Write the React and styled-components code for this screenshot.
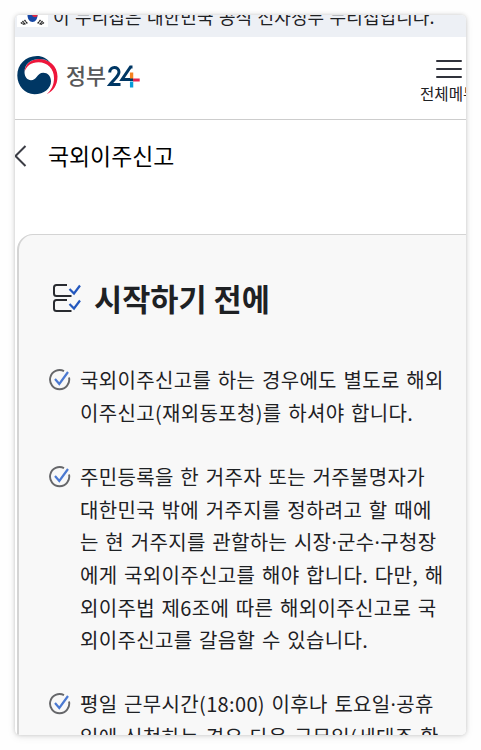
import React from "react";
import styled, { createGlobalStyle } from "styled-components";

const GlobalStyle = createGlobalStyle`
  * { box-sizing: border-box; }
  body { margin: 0; background: #fefefe; font-family: "Noto Sans CJK KR", "Noto Sans", sans-serif; color: #1e2124; }
  h1, h2, p, ul { margin: 0; padding: 0; }
`;

const Page = styled.div`
  height: 750px;
  padding: 15px 15px 15px 15px;
  overflow: hidden;
`;

const Screen = styled.main`
  height: 720px;
  overflow: hidden;
  border-radius: 5px;
  background: #fff;
  box-shadow: 0 0 4px rgba(0, 0, 0, 0.18), 0 2px 9px rgba(0, 0, 0, 0.08);
`;

const Notice = styled.div`
  display: flex;
  align-items: flex-start;
  height: 22px;
  padding-left: 2px;
  overflow: hidden;
  background: #edf0f5;
`;

const Flag = styled.svg`
  flex: none;
  width: 31px;
  height: 12px;
  margin-right: 5px;
`;

const NoticeText = styled.p`
  font-size: 18px;
  line-height: 24px;
  margin-top: -11px;
  white-space: nowrap;
  letter-spacing: 0.1px;
  word-spacing: 1.2px;
`;

const Header = styled.header`
  display: flex;
  justify-content: space-between;
  height: 83px;
  border-bottom: 1px solid #cdcdcd;
`;

const Logo = styled.svg`
  width: 130px;
  height: 44px;
  margin: 17px 0 0 1px;
`;

const MenuButton = styled.button`
  display: flex;
  flex-direction: column;
  align-items: flex-start;
  width: 46px;
  padding: 22px 0 0;
  border: 0;
  background: none;
  overflow: hidden;
  color: #1e2124;
  font: 15.6px/20px "Noto Sans CJK KR", sans-serif;
  white-space: nowrap;

  svg { flex: none; margin: 0 0 4px 16px; }
`;

const TitleBar = styled.div`
  display: flex;
  align-items: center;
  height: 71px;

  svg { flex: none; margin-right: 21px; }
`;

const PageTitle = styled.h1`
  margin-top: -2px;
  color: #000;
  font-size: 22.9px;
  font-weight: 400;
  line-height: 34px;
`;

const Card = styled.section`
  width: 490px;
  height: 600px;
  margin: 43px 0 0 2px;
  padding: 39px 0 0 30px;
  border: 2px solid #d4d4d4;
  border-top-width: 1px;
  border-radius: 16px;
  background: #f8f8f8;
`;

const CardHeading = styled.div`
  display: flex;
  align-items: center;
  height: 48px;
  margin-bottom: 42.3px;

  svg { flex: none; margin: 0 13px 0 4px; }
`;

const CardTitle = styled.h2`
  font-size: 30.6px;
  font-weight: 700;
  line-height: 44px;
  white-space: nowrap;
`;

const Notes = styled.ul`
  list-style: none;
`;

const Note = styled.li`
  display: flex;
  margin-bottom: 31.3px;

  svg { flex: none; margin: 4px 8px 0 -1px; }
`;

const NoteText = styled.p`
  font-size: 20px;
  line-height: 32.65px;
  letter-spacing: 0.34px;
  word-spacing: 1.8px;
  white-space: pre;
`;

const MiddleDot = styled.span`
  font-family: "Noto Sans", sans-serif;
  line-height: 1;
`;

const notes = [
  "국외이주신고를 하는 경우에도 별도로 해외\n이주신고(재외동포청)를 하셔야 합니다.",
  "주민등록을 한 거주자 또는 거주불명자가\n대한민국 밖에 거주지를 정하려고 할 때에\n는 현 거주지를 관할하는 시장·군수·구청장\n에게 국외이주신고를 해야 합니다. 다만, 해\n외이주법 제6조에 따른 해외이주신고로 국\n외이주신고를 갈음할 수 있습니다.",
  "평일 근무시간(18:00) 이후나 토요일·공휴\n일에 신청하는 경우 다음 근무일(세대주 확",
];

function FlagMark() {
  return (
    <Flag viewBox="0 0 31 12">
      <rect width="31" height="12" fill="#fff" />
      <path d="M10.5 0h10c0 4-2 7-5 7s-5-3-5-7" fill="#1747a5" />
      <path d="M15 0h5.5c0 3-4.5 3-5.5 0" fill="#db2742" />
      <g stroke="#222" strokeWidth="1.3">
        <path d="M5.5 6l3 3.7M7.5 5l3 3.7M3.8 7.5l3 2" strokeDasharray="2 .5" />
        <path d="M25.5 6l-3 3.7M23.5 5l-3 3.7M27 7.5l-3 2" strokeDasharray="2 .5" />
      </g>
    </Flag>
  );
}

function SiteLogo() {
  return (
    <Logo viewBox="0 0 130 44">
      <path d="M8.5 18C9 10 15 5 23 5c10 0 18.500 7 18.500 17.500 0 9-4.500 15-11 17.800C35.500 36 38 31 38 24c0-9-6.500-15.700-15.500-15.700C15 8.300 10.500 12 8.500 18Z" fill="#ee163b" />
      <path d="M21 2C9.5 2 1.3 10.5 1.3 21.5c0 10.500 7.700 18.700 17.200 18.700S35 34.500 35 27.200c0-5.200-3.500-8.500-7.700-8.500-3.300 0-4.800 1.800-6.500 4s-3.300 3.500-5.800 3.500c-3.500 0-6.500-3.200-6.500-8.200C8.500 10 15 5 23 5c5 0 8 1.200 11 3.300C31 4.500 26.500 2 21 2Z" fill="#003764" />
      <text x="50" y="30" fill="#58585a" fontSize="22" fontWeight="500" textLength="40" lengthAdjust="spacingAndGlyphs" fontFamily="Noto Sans CJK KR">정부</text>
      <g fill="none" strokeWidth="3">
        <path d="M93.700 18.500c0-6.600 9.300-6.500 9.300-.5 0 4-4.500 7-9 12.500h10.500" stroke="#003764" />
        <path d="M116.500 13h-2l-8.500 12.500h11" stroke="#003764" />
        <path d="M115.600 18.500v6" stroke="#f58220" strokeWidth="3.300" />
        <path d="M115.600 27.500v6" stroke="#079bd8" strokeWidth="3.300" />
        <path d="M117 26h6.700" stroke="#e7244e" />
      </g>
    </Logo>
  );
}

function ListCheckIcon() {
  return (
    <svg width="28" height="28" viewBox="0 0 28 28" fill="none" strokeWidth="2">
      <path d="M14 1H3.500Q1 1 1 3.500v6Q1 12 3.500 12h15M14 16H3.500Q1 16 1 18.500v6Q1 27 3.500 27h15" stroke="#292b30" />
      <path d="m16.500 5 4.500 4.500L27 1.500M16.500 20l4.500 4.500 6-8" stroke="#2458be" strokeWidth="2.200" />
    </svg>
  );
}

function CheckIcon() {
  return (
    <svg width="24" height="24" viewBox="0 0 24 24" fill="none">
      <path d="M16 3.100A9.600 9.600 0 1 0 21 9.500" stroke="#66676a" strokeWidth="1.900" />
      <path d="m7 11 4.300 5L20 4" stroke="#4b79d1" strokeWidth="2.200" />
    </svg>
  );
}

export default function App() {
  return (
    <Page>
      <GlobalStyle />
      <Screen>
        <Notice>
          <FlagMark />
          <NoticeText>이 누리집은 대한민국 공식 전자정부 누리집입니다.</NoticeText>
        </Notice>
        <Header>
          <SiteLogo />
          <MenuButton>
            <svg width="26" height="20" viewBox="0 0 26 20" stroke="#30323b" strokeWidth="2" strokeLinecap="round">
              <path d="M1 2h24M1 10h24M1 18h24" />
            </svg>
            전체메뉴
          </MenuButton>
        </Header>
        <TitleBar>
          <svg width="12" height="22" viewBox="0 0 12 22" fill="none" stroke="#3b3d45" strokeWidth="2">
            <path d="M10.500 1 .5 11l10 10" />
          </svg>
          <PageTitle>국외이주신고</PageTitle>
        </TitleBar>
        <Card>
          <CardHeading>
            <ListCheckIcon />
            <CardTitle>시작하기 전에</CardTitle>
          </CardHeading>
          <Notes>
            {notes.map((note) => (
              <Note key={note}>
                <CheckIcon />
                <NoteText>
                  {note.split("·").map((part, i) => (
                    <React.Fragment key={part}>
                      {i > 0 && <MiddleDot>·</MiddleDot>}
                      {part}
                    </React.Fragment>
                  ))}
                </NoteText>
              </Note>
            ))}
          </Notes>
        </Card>
      </Screen>
    </Page>
  );
}
